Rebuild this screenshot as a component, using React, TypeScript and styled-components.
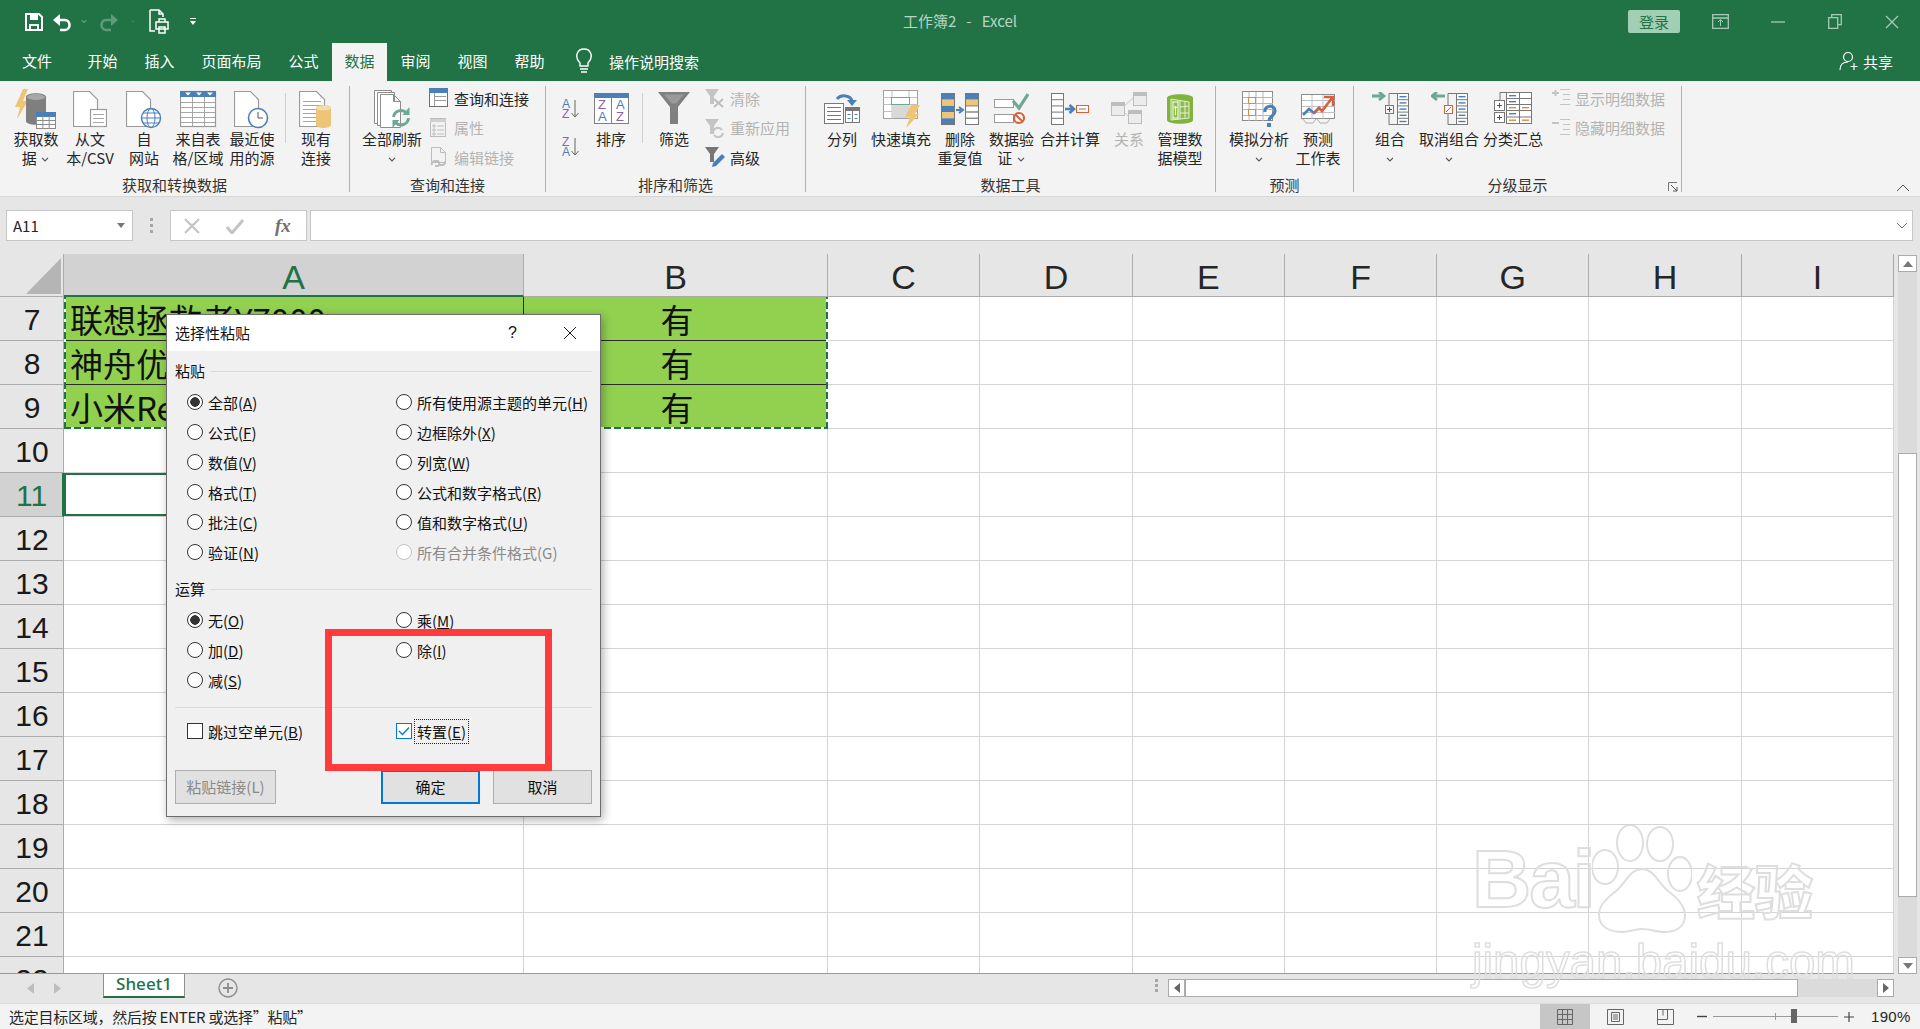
import React from 'react';
import styled, { createGlobalStyle } from 'styled-components';

const UI = `"Noto Sans CJK SC", "Noto Sans", sans-serif`;
const GREEN = '#217346';
const BLUE = '#4a7fb8';
const PURPLE = '#8e5fb0';
const ORANGE = '#eec476';
const GREY = '#7f7f7f';
const TEAL = '#6ea892';
const RED = '#d9603b';

const GlobalStyle = createGlobalStyle`
  html, body { margin: 0; padding: 0; background: #fff; }
  body { font-family: ${UI}; font-size: 15px; color: #262626; }
  * { box-sizing: border-box; }
`;

const Page = styled.div`
  position: relative;
  width: 1920px;
  height: 1029px;
  overflow: hidden;
  display: flex;
  flex-direction: column;
  background: #e6e6e6;
`;

/* title bar */
const TitleBar = styled.div`
  height: 43px;
  background: ${GREEN};
  display: grid;
  grid-template-columns: 1fr auto 1fr;
  align-items: center;
`;
const Qat = styled.div`
  display: flex;
  align-items: center;
  padding-left: 24px;
  height: 40px;
`;
const QatSlot = styled.span<{ $w: number }>`
  width: ${p => p.$w}px;
  display: flex;
  align-items: center;
  justify-content: center;
`;
const DocTitle = styled.div`
  color: #b9d3c4;
  font-size: 15px;
  line-height: 38px;
  height: 40px;
  white-space: pre;
`;
const WinControls = styled.div`
  display: flex;
  align-items: center;
  justify-content: flex-end;
  height: 40px;
`;
const SignIn = styled.div`
  width: 52px;
  height: 23px;
  margin-right: 12px;
  background: #a2cfb4;
  border-radius: 2px;
  color: ${GREEN};
  text-align: center;
  line-height: 23px;
  font-size: 15px;
`;
const WinBtn = styled.span`
  width: 57px;
  display: flex;
  justify-content: center;
`;

/* tabs */
const TabRow = styled.div`
  height: 38px;
  background: ${GREEN};
  display: flex;
  align-items: stretch;
  color: #fff;
`;
const Tab = styled.div<{ $active?: boolean; $w?: number }>`
  width: ${p => (p.$w ? `${p.$w}px` : 'auto')};
  padding: ${p => (p.$w ? '0' : '0 13.5px')};
  text-align: center;
  line-height: 36px;
  font-size: 15px;
  background: ${p => (p.$active ? '#f3f3f3' : 'transparent')};
  color: ${p => (p.$active ? GREEN : '#fff')};
`;
const TellMe = styled.div`
  display: flex;
  align-items: center;
  padding-left: 17px;
  gap: 16px;
  font-size: 15px;
  height: 36px;
`;
const Share = styled.div`
  margin-left: auto;
  display: flex;
  align-items: center;
  gap: 4px;
  padding-right: 27px;
  height: 36px;
  font-size: 15px;
`;

/* ribbon */
const Ribbon = styled.div`
  height: 116px;
  background: #f3f3f3;
  display: flex;
  padding-top: 5px;
  position: relative;
  border-bottom: 1px solid #d6d6d6;
`;
const Group = styled.div<{ $w: number }>`
  width: ${p => p.$w}px;
  height: 106px;
  border-right: 1px solid #b1b1b1;
  display: flex;
  flex-direction: column;
  position: relative;
`;
const GroupBody = styled.div<{ $pad: number }>`
  height: 92px;
  display: flex;
  align-items: flex-start;
  padding-left: ${p => p.$pad}px;
`;
const GroupLabel = styled.div`
  height: 14px;
  line-height: 14px;
  text-align: center;
  font-size: 15px;
  color: #333;
`;
const Tool = styled.div<{ $w: number; $dim?: boolean }>`
  width: ${p => p.$w}px;
  flex: none;
  display: flex;
  flex-direction: column;
  align-items: center;
  padding-top: 2px;
  color: ${p => (p.$dim ? '#b3b3b3' : '#262626')};
`;
const IconSlot = styled.div`
  height: 41px;
  display: flex;
  align-items: center;
  justify-content: center;
`;
const ToolText = styled.div`
  font-size: 15px;
  line-height: 19px;
  text-align: center;
  white-space: nowrap;
`;
const VSep = styled.div<{ $l: number; $r: number }>`
  width: 1px;
  height: 50px;
  margin: 7px ${p => p.$r}px 0 ${p => p.$l}px;
  background: #d0d0d0;
  flex: none;
`;
const SmallCol = styled.div<{ $ml: number }>`
  display: flex;
  flex-direction: column;
  gap: 5.5px;
  margin-left: ${p => p.$ml}px;
`;
const SmallRow = styled.div<{ $dim?: boolean }>`
  height: 24px;
  display: flex;
  align-items: center;
  gap: 5px;
  font-size: 15px;
  white-space: nowrap;
  color: ${p => (p.$dim ? '#b3b3b3' : '#262626')};
`;
const SortCol = styled.div`
  width: 30px;
  margin-left: 10px;
  padding-top: 13px;
  display: flex;
  flex-direction: column;
  align-items: center;
  gap: 18px;
  flex: none;
`;
const Launcher = styled.span`
  position: absolute;
  right: 3px;
  bottom: 0;
  display: flex;
`;
const Collapse = styled.span`
  position: absolute;
  right: 10px;
  bottom: 4px;
  display: flex;
`;

/* formula bar */
const FormulaBar = styled.div`
  height: 57px;
  background: #e6e6e6;
  display: flex;
  align-items: flex-start;
  padding: 13px 0 0 6px;
`;
const NameBox = styled.div`
  width: 127px;
  height: 31px;
  background: #fff;
  border: 1px solid #c6c6c6;
  display: flex;
  align-items: center;
  justify-content: space-between;
  padding: 0 7px 0 6px;
  font-size: 15px;
`;
const Dots = styled.div`
  width: 37px;
  height: 31px;
  display: flex;
  flex-direction: column;
  align-items: center;
  justify-content: center;
  gap: 3px;
  i { width: 3px; height: 3px; background: #a6a6a6; }
`;
const FxBox = styled.div`
  width: 137px;
  height: 31px;
  background: #fff;
  border: 1px solid #c6c6c6;
  display: flex;
  align-items: center;
  padding-left: 13px;
  gap: 26px;
`;
const FxGlyph = styled.span`
  font-family: "Liberation Serif", serif;
  font-style: italic;
  font-weight: 700;
  font-size: 19px;
  color: #707070;
  margin-left: 5px;
`;
const FormulaInput = styled.div`
  width: 1603px;
  height: 31px;
  margin-left: 3px;
  background: #fff;
  border: 1px solid #c6c6c6;
  display: flex;
  align-items: center;
  justify-content: flex-end;
  padding-right: 4px;
`;

/* sheet */
const SheetWrap = styled.div`
  height: 720px;
  display: flex;
  background: #fff;
`;
const Grid = styled.div`
  width: 1894px;
  height: 720px;
  overflow: hidden;
  display: grid;
  grid-template-columns: 64px 460px 304px repeat(7, 152.3px);
  grid-template-rows: 43px repeat(15, 44px) 17px;
  position: relative;
  border-bottom: 1px solid #9a9a9a;
`;
const Corner = styled.div`
  background: #e6e6e6;
  border-bottom: 1px solid #ababab;
  border-right: 1px solid #ababab;
  display: flex;
  align-items: flex-end;
  justify-content: flex-end;
  padding: 0 2px 2px 0;
`;
const ColHead = styled.div<{ $on?: boolean }>`
  background: ${p => (p.$on ? '#d2d2d2' : '#e6e6e6')};
  color: ${p => (p.$on ? GREEN : '#262626')};
  border-right: 1px solid #ababab;
  border-bottom: ${p => (p.$on ? `2px solid ${GREEN}` : '1px solid #ababab')};
  font-family: "Liberation Sans", sans-serif;
  font-size: 34px;
  line-height: 46px;
  text-align: center;
  overflow: hidden;
`;
const RowHead = styled.div<{ $on?: boolean }>`
  background: ${p => (p.$on ? '#d2d2d2' : '#e6e6e6')};
  color: ${p => (p.$on ? GREEN : '#1a1a1a')};
  border-right: ${p => (p.$on ? `2px solid ${GREEN}` : '1px solid #ababab')};
  border-bottom: 1px solid #ababab;
  font-family: "Liberation Sans", sans-serif;
  font-size: 30px;
  line-height: 46px;
  padding-left: 1px;
  text-align: center;
  overflow: hidden;
`;
const Cell = styled.div<{ $fill?: boolean; $center?: boolean; $active?: boolean }>`
  background: ${p => (p.$fill ? '#92d050' : '#fff')};
  border-right: 1px solid ${p => (p.$fill ? '#2b2b2b' : '#d4d4d4')};
  border-bottom: 1px solid ${p => (p.$fill ? '#2b2b2b' : '#d4d4d4')};
  font-size: 33px;
  line-height: 45px;
  color: #111;
  padding-left: ${p => (p.$center ? '3px' : '6px')};
  white-space: nowrap;
  overflow: hidden;
  text-align: ${p => (p.$center ? 'center' : 'left')};
  ${p => (p.$active ? `box-shadow: inset 0 0 0 2px ${GREEN};` : '')}
`;
const Ants = styled.div`
  position: absolute;
  inset: 0;
  grid-column: 2 / 4;
  grid-row: 2 / 5;
  pointer-events: none;
  background:
    repeating-linear-gradient(90deg, ${GREEN} 0 7px, #fff 7px 10px) left bottom / 100% 2px no-repeat,
    repeating-linear-gradient(0deg, ${GREEN} 0 7px, #fff 7px 10px) left top / 2px 100% no-repeat,
    repeating-linear-gradient(0deg, ${GREEN} 0 7px, #fff 7px 10px) right top / 2px 100% no-repeat;
`;
const VScroll = styled.div`
  width: 26px;
  background: #e6e6e6;
  display: flex;
  flex-direction: column;
  padding: 1px 3px 0 4px;
`;
const ScrollBtn = styled.div`
  flex: none;
  width: 100%;
  height: 17px;
  background: #fff;
  border: 1px solid #ababab;
  display: flex;
  align-items: center;
  justify-content: center;
`;
const VTrack = styled.div`
  flex: 1;
  background: #dbdbdb;
  padding-top: 181px;
`;
const VThumb = styled.div`
  height: 444px;
  background: #fff;
  border: 1px solid #ababab;
`;

/* sheet tabs */
const TabBar = styled.div`
  height: 29px;
  background: #e6e6e6;
  display: flex;
  align-items: flex-start;
`;
const TabArrows = styled.div`
  width: 103px;
  height: 28px;
  display: flex;
  align-items: center;
  gap: 20px;
  padding-left: 27px;
`;
const SheetTab = styled.div`
  width: 82px;
  height: 25px;
  margin-top: -1px;
  background: #fff;
  border: 1px solid #8f8f8f;
  border-top: none;
  border-bottom: 2px solid ${GREEN};
  color: ${GREEN};
  text-align: center;
  font-family: "Noto Sans", sans-serif;
  font-size: 17px;
  line-height: 22px;
  font-weight: 500;
`;
const AddSheet = styled.div`
  margin: 4px 0 0 33px;
  display: flex;
`;
const TabDots = styled.div`
  margin: 5px 0 0 917px;
  display: flex;
  flex-direction: column;
  gap: 2px;
  i { width: 3px; height: 3px; background: #a6a6a6; }
`;
const HScroll = styled.div`
  width: 726px;
  margin: 5px 0 0 10px;
  display: flex;
  height: 18px;
`;
const HBtn = styled.div`
  width: 17px;
  height: 18px;
  flex: none;
  background: #fff;
  border: 1px solid #ababab;
  display: flex;
  align-items: center;
  justify-content: center;
`;
const HTrack = styled.div`
  flex: 1;
  background: #dbdbdb;
`;
const HThumb = styled.div`
  width: 613px;
  height: 18px;
  background: #fff;
  border: 1px solid #ababab;
`;

/* status bar */
const StatusBar = styled.div`
  height: 26px;
  background: #f3f3f3;
  border-top: 1px solid #dcdcdc;
  display: flex;
  align-items: center;
  padding-left: 9px;
  font-size: 15px;
  line-height: 24px;
`;
const StatusText = styled.span`
  letter-spacing: -0.25px;
`;
const StatusRight = styled.div`
  margin-left: auto;
  display: flex;
  align-items: center;
  height: 100%;
`;
const ViewBtn = styled.div<{ $on?: boolean }>`
  width: 50px;
  height: 100%;
  background: ${p => (p.$on ? '#c6c6c6' : 'transparent')};
  display: flex;
  align-items: center;
  justify-content: center;
`;
const Zoomer = styled.div`
  display: flex;
  align-items: center;
  margin-left: 7px;
  gap: 6px;
`;
const ZoomTrack = styled.div`
  position: relative;
  width: 125px;
  height: 1px;
  background: #9a9a9a;
  &::before {
    content: '';
    position: absolute;
    left: 62px;
    top: -3px;
    width: 1px;
    height: 7px;
    background: #9a9a9a;
  }
`;
const ZoomThumb = styled.span`
  position: absolute;
  left: 78px;
  top: -7px;
  width: 6px;
  height: 14px;
  background: #666;
`;
const Percent = styled.div`
  width: 66px;
  padding-left: 17px;
  font-family: "Liberation Sans", sans-serif;
  font-size: 15px;
  letter-spacing: 0.3px;
  white-space: nowrap;
`;

/* dialog */
const Dialog = styled.div`
  position: absolute;
  left: 166px;
  top: 314px;
  width: 435px;
  height: 503px;
  background: #f0f0f0;
  border: 1px solid #6d6d6d;
  box-shadow: 2px 3px 9px rgba(0, 0, 0, 0.32);
  display: flex;
  flex-direction: column;
  color: #111;
  font-size: 15px;
`;
const DialogTitle = styled.div`
  height: 36px;
  flex: none;
  background: #fff;
  display: flex;
  align-items: center;
  padding: 0 23px 0 8px;
  line-height: 36px;
`;
const HelpMark = styled.span`
  margin-left: auto;
  margin-right: 46px;
  font-family: "Liberation Sans", sans-serif;
  font-size: 16px;
`;
const DialogBody = styled.div`
  padding: 0 8px;
  display: flex;
  flex-direction: column;
`;
const Legend = styled.div<{ $top: number }>`
  height: 20px;
  margin-top: ${p => p.$top}px;
  display: flex;
  align-items: center;
  gap: 5px;
  line-height: 20px;
  &::after {
    content: '';
    flex: 1;
    height: 1px;
    background: #dadada;
  }
`;
const OptionGrid = styled.div<{ $top: number }>`
  margin-top: ${p => p.$top}px;
  display: grid;
  grid-template-columns: 209px 1fr;
  grid-auto-rows: 30px;
`;
const Option = styled.div<{ $dim?: boolean }>`
  display: flex;
  align-items: center;
  padding-left: 12px;
  gap: 5px;
  white-space: nowrap;
  color: ${p => (p.$dim ? '#8a8a8a' : '#111')};
`;
const Radio = styled.span<{ $on?: boolean; $dim?: boolean }>`
  width: 16px;
  height: 16px;
  flex: none;
  border-radius: 50%;
  border: 1px solid ${p => (p.$dim ? '#c4c4c4' : '#333')};
  background: ${p => (p.$on ? 'radial-gradient(circle, #333 0 4.5px, #fff 5px)' : '#fff')};
`;
const Check = styled.span<{ $on?: boolean }>`
  width: 16px;
  height: 16px;
  flex: none;
  border: 1px solid ${p => (p.$on ? '#0078d7' : '#333')};
  background: #fff;
  display: flex;
  align-items: center;
  justify-content: center;
`;
const FocusLabel = styled.span`
  outline: 1px dotted #222;
  padding: 1px 2px;
  margin-left: -2px;
  line-height: 21px;
`;
const Divider = styled.div`
  height: 1px;
  margin-top: 12px;
  background: #dadada;
`;
const ButtonRow = styled.div`
  margin-top: 24px;
  display: flex;
  gap: 13px;
`;
const DlgButton = styled.div<{ $w: number; $primary?: boolean; $dim?: boolean }>`
  width: ${p => p.$w}px;
  height: 34px;
  background: #e1e1e1;
  border: ${p => (p.$primary ? '2px solid #0078d7' : '1px solid #adadad')};
  color: ${p => (p.$dim ? '#8a8a8a' : '#111')};
  text-align: center;
  line-height: ${p => (p.$primary ? '30px' : '32px')};
  margin-left: ${p => (p.$primary ? 'auto' : '0')};
`;
const RedBox = styled.div`
  position: absolute;
  left: 325px;
  top: 629px;
  width: 227px;
  height: 142px;
  border: 7px solid #ff3b3b;
  pointer-events: none;
`;

/* watermark */
const Watermark = styled.div`
  position: absolute;
  left: 1472px;
  top: 825px;
  width: 350px;
  pointer-events: none;
  filter: blur(0.5px);
  color: transparent;
  -webkit-text-stroke: 2px #dedede;
`;
const MarkTop = styled.div`
  display: flex;
  align-items: flex-end;
  height: 108px;
`;
const MarkBai = styled.span`
  width: 120px;
  font-family: "Liberation Sans", sans-serif;
  font-weight: 700;
  font-size: 82px;
  line-height: 108px;
  letter-spacing: -2px;
`;
const MarkJing = styled.span`
  margin-left: 5px;
  font-weight: 900;
  font-size: 58px;
  line-height: 88px;
  white-space: nowrap;
`;
const MarkUrl = styled.div`
  margin-top: 3px;
  font-family: "Liberation Sans", sans-serif;
  font-size: 47.5px;
  line-height: 52px;
  white-space: nowrap;
  -webkit-text-stroke-width: 1.5px;
`;

/* icons */
const Svg = ({ w, h, children }: { w: number; h: number; children: React.ReactNode }) => (
  <svg width={w} height={h} viewBox={`0 0 ${w} ${h}`} fill="none" style={{ display: 'block', flex: 'none' }}>
    {children}
  </svg>
);

const Chev = ({ c = '#555' }: { c?: string }) => (
  <svg width="8" height="5" viewBox="0 0 8 5" fill="none" style={{ display: 'inline-block', verticalAlign: 'middle', margin: '0 1px' }}>
    <path d="M1 .8 4 3.8 7 .8" stroke={c} strokeWidth="1.2" />
  </svg>
);

const Page1 = ({ w = 25, h = 36, s = '#9a9a9a' }: { w?: number; h?: number; s?: string }) => (
  <path d={`M.5.5h${w - 9}l8 8v${h - 9}h-${w - 1}z M${w - 9}.5v8h8`} fill="#fff" stroke={s} strokeWidth="1.2" />
);

const Lines = ({ x, y, n, w, c = '#a6a6a6', gap = 4 }: { x: number; y: number; n: number; w: number; c?: string; gap?: number }) => (
  <>
    {Array.from({ length: n }).map((_, i) => (
      <rect key={i} x={x} y={y + i * gap} width={w} height="1" fill={c} />
    ))}
  </>
);

const MiniTable = ({ x, y, w, h, head = BLUE, rows = 3, cols = 3, s = '#8c8c8c' }: { x: number; y: number; w: number; h: number; head?: string; rows?: number; cols?: number; s?: string }) => (
  <g>
    <rect x={x + 0.5} y={y + 0.5} width={w} height={h} fill="#fff" stroke={s} />
    <rect x={x} y={y} width={w + 1} height={h / (rows + 1) + 1} fill={head} />
    {Array.from({ length: rows - 1 }).map((_, i) => (
      <rect key={i} x={x} y={y + ((i + 2) * h) / (rows + 1)} width={w} height="1" fill={s} />
    ))}
    {Array.from({ length: cols - 1 }).map((_, i) => (
      <rect key={i} x={x + ((i + 1) * w) / cols} y={y + h / (rows + 1)} width="1" height={(h * rows) / (rows + 1)} fill={s} />
    ))}
  </g>
);

const IcoGetData = () => (
  <Svg w={42} h={40}>
    <path d="M8 0 0 18h5L2 30 13 12H8l5-12z" fill={ORANGE} />
    <path d="M11 8c0-5 20-5 20 0v24c0 5-20 5-20 0z" fill={GREY} />
    <ellipse cx="21" cy="8" rx="9" ry="3" fill="#a8a8a8" />
    <MiniTable x={21} y={23} w={19} h={16} />
  </Svg>
);
const IcoFromText = () => (
  <Svg w={34} h={40}>
    <g transform="translate(0 2)">
      <Page1 />
      <rect x="17.5" y="18.5" width="16" height="17" fill="#fff" stroke="#9a9a9a" strokeWidth="1.2" />
      <Lines x={20} y={23} n={4} w={11} />
    </g>
  </Svg>
);
const IcoFromWeb = () => (
  <Svg w={36} h={40}>
    <g transform="translate(0 2)">
      <Page1 />
      <circle cx="25" cy="27" r="9.5" fill="#fff" stroke={BLUE} strokeWidth="1.4" />
      <ellipse cx="25" cy="27" rx="4" ry="9.5" stroke={BLUE} />
      <path d="M15.5 27h19M17 22h16M17 32h16" stroke={BLUE} />
    </g>
  </Svg>
);
const IcoTable = () => (
  <Svg w={37} h={40}>
    <g transform="translate(0 2)">
      <rect x=".5" y=".5" width="35" height="35" fill="#fff" stroke="#9a9a9a" strokeWidth="1.2" />
      <rect x="0" y="0" width="36" height="6" fill={BLUE} />
      <path d="M5 1.5h6l-3 3zM16 1.5h6l-3 3zM27 1.5h6l-3 3z" fill="#fff" />
      <Lines x={1} y={11} n={5} w={34} gap={5} />
      <rect x="12" y="6" width="1" height="29" fill="#a6a6a6" />
      <rect x="24" y="6" width="1" height="29" fill="#a6a6a6" />
    </g>
  </Svg>
);
const IcoRecent = () => (
  <Svg w={36} h={40}>
    <g transform="translate(0 2)">
      <Page1 />
      <circle cx="24" cy="27" r="9.5" fill="#fff" stroke={BLUE} strokeWidth="1.6" />
      <path d="M24 21v6h5" stroke="#555" />
    </g>
  </Svg>
);
const IcoExisting = () => (
  <Svg w={34} h={40}>
    <g transform="translate(0 2)">
      <Page1 w={26} />
      <Lines x={4} y={10} n={6} w={18} gap={4} />
      <path d="M17 17c0-4 15-4 15 0v17c0 4-15 4-15 0z" fill={ORANGE} />
      <ellipse cx="24.5" cy="17" rx="7.5" ry="2.6" fill="#f5dca8" />
    </g>
  </Svg>
);
const IcoRefresh = () => (
  <Svg w={37} h={38}>
    <path d="M.5.5h17v33H.5z" fill="#fff" stroke="#8c8c8c" />
    <path d="M3.5 2.500h17v33h-17z" fill="#fff" stroke="#8c8c8c" />
    <path d="M6.500 4.500h13l7 7v26h-20zM19.500 4.500v7h7" fill="#fff" stroke="#8c8c8c" />
    <path d="M19.500 27a7.500 7.500 0 0 1 13-4M34.500 28a7.500 7.500 0 0 1-13 4.500" stroke={TEAL} strokeWidth="3" />
    <path d="M35.500 17v8h-7zM18.500 38v-8h7z" fill={TEAL} />
  </Svg>
);
const IcoQuery = () => (
  <Svg w={20} h={20}>
    <rect x=".5" y=".5" width="18" height="18" fill="#fff" stroke="#6f6f6f" />
    <rect x="0" y="0" width="19" height="5" fill={BLUE} />
    <rect x="6" y="8" width="11" height="1" fill="#9a9a9a" />
    <rect x="6" y="12" width="11" height="1" fill="#9a9a9a" />
    <rect x="5" y="5" width="1" height="13" fill="#9a9a9a" />
  </Svg>
);
const IcoProps = () => (
  <Svg w={20} h={20}>
    <rect x="1.5" y=".5" width="15" height="18" fill="#f3f3f3" stroke="#bdbdbd" />
    <rect x="1" y="1" width="16" height="3" fill="#cfcfcf" />
    <path d="M4 7h2v2H4zM4 11h2v2H4zM4 15h2v2H4zM8 8h7M8 12h7M8 16h7" stroke="#bdbdbd" />
  </Svg>
);
const IcoEditLinks = () => (
  <Svg w={20} h={20}>
    <path d="M2.5.5h9l5 5v10h-14zM11.5.5v5h5" fill="#f3f3f3" stroke="#bdbdbd" />
    <path d="M3 18a3 3 0 0 1 3-4h3a3 3 0 0 1 0 5H6M16 14a3 3 0 0 1-3 4h-3" stroke="#bdbdbd" strokeWidth="2" />
  </Svg>
);
const SortGlyph = styled.text<{ $c: string; $size: number }>`
  font-family: "Liberation Sans", sans-serif;
  font-size: ${p => p.$size}px;
  fill: ${p => p.$c};
`;
const IcoSortAZ = ({ flip }: { flip?: boolean }) => (
  <Svg w={18} h={20}>
    <SortGlyph x="0" y="9" $size={12} $c={flip ? PURPLE : BLUE}>{flip ? 'Z' : 'A'}</SortGlyph>
    <SortGlyph x="0" y="19" $size={12} $c={flip ? BLUE : PURPLE}>{flip ? 'A' : 'Z'}</SortGlyph>
    <path d="M13 1v17M9.5 14l3.500 4 3.500-4" stroke="#666" />
  </Svg>
);
const IcoSort = () => (
  <Svg w={35} h={32}>
    <rect x=".5" y=".5" width="34" height="30" fill="#fff" stroke="#808080" />
    <rect x="0" y="0" width="35" height="5" fill={BLUE} />
    <rect x="17" y="5" width="1" height="26" fill="#808080" />
    <SortGlyph x="4" y="16" $size={13} $c={PURPLE}>Z</SortGlyph>
    <SortGlyph x="4" y="28" $size={13} $c={BLUE}>A</SortGlyph>
    <SortGlyph x="22" y="16" $size={13} $c={BLUE}>A</SortGlyph>
    <SortGlyph x="22" y="28" $size={13} $c={PURPLE}>Z</SortGlyph>
  </Svg>
);
const IcoFunnel = () => (
  <Svg w={33} h={33}>
    <path d="M0 0h32L20 15v17h-8V15z" fill="#808080" />
    <path d="M6 2.500h20l-8 9h-4z" fill="#9a9a9a" />
  </Svg>
);
const SmallFunnel = ({ c }: { c: string }) => <path d="M0 1h14L9 8v8H5V8z" fill={c} />;
const IcoClear = () => (
  <Svg w={20} h={20}>
    <SmallFunnel c="#c4c4c4" />
    <path d="M9 11l9 8M18 11l-9 8" stroke="#bdbdbd" strokeWidth="2" />
  </Svg>
);
const IcoReapply = () => (
  <Svg w={20} h={20}>
    <SmallFunnel c="#c4c4c4" />
    <path d="M8 14a5 5 0 0 1 9-2M18 15a5 5 0 0 1-9 2" stroke="#c4c4c4" strokeWidth="2" />
  </Svg>
);
const IcoAdvanced = () => (
  <Svg w={20} h={22}>
    <SmallFunnel c="#777" />
    <path d="M7 21l1-4 9-9 3 3-9 9z" fill={BLUE} />
  </Svg>
);
const IcoTextCols = () => (
  <Svg w={36} h={32}>
    <path d="M13 6a8 6 0 0 1 15 2" stroke={BLUE} strokeWidth="3" />
    <path d="M23 7h10l-5 6z" fill={BLUE} />
    <rect x=".5" y="10.500" width="19" height="20" fill="#fff" stroke="#777" />
    <Lines x={3} y={14} n={4} w={14} c={BLUE} gap={4} />
    <rect x="21.500" y="14.500" width="14" height="15" fill="#fff" stroke="#777" />
    <rect x="21" y="14" width="15" height="4" fill="#777" />
    <path d="M28.500 18v11" stroke="#777" />
    <path d="M23.500 21.500h3M30.500 21.500h3M23.500 25.500h3M30.500 25.500h3" stroke={BLUE} />
  </Svg>
);
const IcoFlash = () => (
  <Svg w={37} h={38}>
    <rect x=".5" y=".5" width="34" height="28" fill="#fff" stroke="#a0a0a0" />
    <path d="M.5 7.500h34M.5 14.500h34M.5 21.500h34M9 1v28M26 1v28" stroke="#c0c0c0" />
    <rect x="8.500" y="7.500" width="18" height="7" fill="#fff" stroke={TEAL} />
    <rect x="9" y="15" width="17" height="13" fill="#d9d9d9" />
    <path d="M28 15h9l-5 9h4L23 38l4-11h-5z" fill={ORANGE} />
  </Svg>
);
const Stripe = ({ x, rows }: { x: number; rows: string[] }) => (
  <g>
    {rows.map((c, i) => (
      <rect key={i} x={x + 0.5} y={i * 6.2 + 0.5} width="13" height="6.200" fill={c} stroke={c === '#fff' ? '#777' : 'none'} />
    ))}
    <rect x={x + 0.5} y=".5" width="13" height="31" stroke="#777" />
  </g>
);
const IcoDup = () => (
  <Svg w={38} h={32}>
    <Stripe x={0} rows={[BLUE, ORANGE, BLUE, ORANGE, BLUE]} />
    <Stripe x={24} rows={[BLUE, ORANGE, '#fff', '#fff', '#fff']} />
    <path d="M15 17h5M18 14l4 3-4 3" stroke={BLUE} strokeWidth="2" />
  </Svg>
);
const IcoValidate = () => (
  <Svg w={35} h={32}>
    <rect x=".5" y="6.500" width="19" height="8" fill="#fff" stroke="#9a9a9a" />
    <rect x=".5" y="21.500" width="19" height="8" fill="#fff" stroke="#9a9a9a" />
    <path d="M19 8l6 7L34 1" stroke={TEAL} strokeWidth="3.200" />
    <circle cx="25" cy="25" r="5" fill="#fff" stroke={RED} strokeWidth="2.200" />
    <path d="M21.500 21.500l7 7" stroke={RED} strokeWidth="2" />
  </Svg>
);
const IcoConsolidate = () => (
  <Svg w={38} h={32}>
    <rect x=".5" y=".5" width="12" height="31" fill="#fff" stroke="#777" />
    <Lines x={1} y={6.2} n={4} w={11} c="#777" gap={6.2} />
    <path d="M14 16h7M18.500 12l4.500 4-4.500 4" stroke={BLUE} strokeWidth="2.600" />
    <rect x="25.5" y="12.5" width="12" height="7" fill="#fff" stroke={RED} />
    <rect x="28" y="15.500" width="7" height="1" fill={RED} />
  </Svg>
);
const IcoRelations = () => (
  <Svg w={36} h={33}>
    <path d="M13 14l9-8M13 20l4 4" stroke="#c8c8c8" />
    <rect x=".5" y="10.500" width="13" height="13" fill="#ececec" stroke="#bdbdbd" />
    <rect x="0" y="10" width="14" height="4" fill="#bdbdbd" />
    <rect x="22.500" y=".5" width="13" height="13" fill="#ececec" stroke="#bdbdbd" />
    <rect x="22" y="0" width="14" height="4" fill="#bdbdbd" />
    <rect x="17.500" y="18.500" width="13" height="13" fill="#ececec" stroke="#bdbdbd" />
    <rect x="17" y="18" width="14" height="4" fill="#bdbdbd" />
  </Svg>
);
const IcoModel = () => (
  <Svg w={28} h={30}>
    <path d="M1 4c0-5 26-5 26 0v22c0 5-26 5-26 0z" fill="#7fb33d" />
    <path d="M5 5l18 3v16l-18 2z" fill="#8dbd4d" stroke="#e4f0d0" />
    <path d="M14 7v18M19 7.500v16M14 13l9-1M14 19l9 0" stroke="#e4f0d0" />
    <path d="M7 7v18M12 7v18M7 8h5M7 24h5" stroke="#fff" />
    <path d="M9.500 21V12M8 14l1.500-2 1.500 2" stroke="#fff" />
  </Svg>
);
const IcoWhatIf = () => (
  <Svg w={35} h={36}>
    <rect x=".5" y=".5" width="30" height="29" fill="#fff" stroke="#8c8c8c" />
    <path d="M1 6.500h30M1 12.500h30M1 18.500h30M1 24.500h30M7 1v29M14 1v29M21 1v29" stroke="#b8b8b8" />
    <rect x="6.500" y="6.500" width="7" height="6" fill="#fff" stroke="#e08a3c" />
    <rect x="6.500" y="18.500" width="7" height="6" fill="#fff" stroke="#e08a3c" />
    <path d="M23 21c-1-7 10-8 10-1 0 5-6 5-6 10" stroke={BLUE} strokeWidth="3.200" />
    <rect x="25" y="32" width="4" height="4" fill={BLUE} />
  </Svg>
);
const IcoForecast = () => (
  <Svg w={34} h={30}>
    <rect x=".5" y=".5" width="33" height="24" fill="#fff" stroke="#8c8c8c" />
    <path d="M1 6.500h33M1 12.500h33M1 18.500h33M11 1v24M22 1v24" stroke="#c0c0c0" />
    <path d="M2 21l6-6 5 4 6-6" stroke={BLUE} strokeWidth="2.600" />
    <path d="M13 19l5-5 3 3L31 4M23 3h9v9" stroke={RED} strokeWidth="2.600" />
    <path d="M2 25l3 4h7l3-4M16 25l3 4h7l3-4" stroke="#b0b0b0" />
  </Svg>
);
const Bracket = ({ x }: { x: number }) => <path d={`M${x + 8} .5h-8v31h8`} stroke="#777" />;
const RowStack = ({ x }: { x: number }) => (
  <g>
    <rect x={x + 0.5} y=".5" width="11" height="31" fill="#fff" stroke="#777" />
    {[0, 6.2, 12.4, 18.6, 24.8].map(y => (
      <g key={y}>
        <rect x={x} y={y} width="12" height="1" fill="#777" />
        <rect x={x + 2.5} y={y + 3} width="7" height="1.4" fill={BLUE} />
      </g>
    ))}
  </g>
);
const IcoGroup = () => (
  <Svg w={37} h={33}>
    <g transform="translate(0 1)">
      <path d="M0 3h11M7-1l5 4-5 4" stroke={TEAL} strokeWidth="2.800" />
      <Bracket x={17} />
      <rect x="13.5" y="12.5" width="8" height="8" fill="#f3f3f3" stroke="#777" />
      <path d="M15 16.500h5M17.500 14v5" stroke="#555" />
      <RowStack x={25} />
    </g>
  </Svg>
);
const IcoUngroup = () => (
  <Svg w={37} h={33}>
    <g transform="translate(0 1)">
      <path d="M14 3H2M6-1L1 3l5 4" stroke={TEAL} strokeWidth="2.800" />
      <Bracket x={17} />
      <rect x="13.5" y="12.5" width="8" height="8" fill="#fff" stroke={RED} />
      <path d="M15 19l5-5" stroke={RED} />
      <RowStack x={25} />
    </g>
  </Svg>
);
const IcoSubtotal = () => (
  <Svg w={38} h={33}>
    <rect x="12.5" y=".5" width="25" height="31" fill="#fff" stroke="#777" />
    <path d="M13 6.500h25M13 12.500h25M13 18.500h25M13 25h25M25.500 1v31" stroke="#777" />
    <rect x="15" y="3" width="7" height="1.4" fill={BLUE} />
    <rect x="15" y="9" width="7" height="1.4" fill={BLUE} />
    <rect x="15" y="21" width="7" height="1.4" fill={BLUE} />
    <rect x="15" y="15" width="7" height="1.4" fill="#e08a3c" />
    <rect x="28" y="15" width="7" height="1.4" fill="#e08a3c" />
    <rect x="15" y="27.500" width="7" height="1.4" fill="#e08a3c" />
    <rect x="28" y="27.500" width="7" height="1.4" fill="#e08a3c" />
    <path d="M12 .5H6v8" stroke="#777" />
    <rect x=".5" y="8.500" width="10" height="10" fill="#fff" stroke="#777" />
    <rect x=".5" y="20.500" width="10" height="10" fill="#fff" stroke="#777" />
    <path d="M3 13.500h5M5.500 11v5M3 25.500h5M5.500 23v5" stroke="#555" />
  </Svg>
);
const IcoDetail = ({ plus }: { plus?: boolean }) => (
  <Svg w={18} h={20}>
    <path d={plus ? 'M0 5h7M3.5 2v6' : 'M0 5h7'} stroke="#c4c4c4" strokeWidth="2" />
    <path d="M8 1h10v1H8zM11 6h7v1h-7zM11 11h7v1h-7zM8 16h10v1H8z" fill="#c4c4c4" />
  </Svg>
);

const Mnemonic = ({ text, k, u = true }: { text: string; k: string; u?: boolean }) => (
  <span>
    {text}(
    {u ? <u>{k}</u> : k})
  </span>
);

const leftPaste: [string, string][] = [['全部', 'A'], ['公式', 'F'], ['数值', 'V'], ['格式', 'T'], ['批注', 'C'], ['验证', 'N']];
const rightPaste: [string, string][] = [['所有使用源主题的单元', 'H'], ['边框除外', 'X'], ['列宽', 'W'], ['公式和数字格式', 'R'], ['值和数字格式', 'U'], ['所有合并条件格式', 'G']];

const columns = ['A', 'B', 'C', 'D', 'E', 'F', 'G', 'H', 'I'];
const rows = Array.from({ length: 16 }, (_, i) => i + 7);
const content: Record<number, string> = { 7: '联想拯救者Y7000', 8: '神舟优越者', 9: '小米RedmiBook' };

export default function App() {
  return (
    <Page>
      <GlobalStyle />
      <TitleBar>
        <Qat>
          <QatSlot $w={20}>
            <Svg w={18} h={18}>
              <path d="M1 1h13l3 3v13H1z" stroke="#fff" strokeWidth="2" />
              <path d="M5 1h8v6H5zM4 11h10v6H4z" fill="#fff" />
              <rect x="6" y="13" width="6" height="3" fill={GREEN} />
            </Svg>
          </QatSlot>
          <QatSlot $w={36}>
            <Svg w={20} h={20}>
              <path d="M3 8h9a5 5 0 0 1 1 10H8" stroke="#fff" strokeWidth="2.6" />
              <path d="M8 2v12L1 8z" fill="#fff" />
            </Svg>
          </QatSlot>
          <QatSlot $w={8}><Chev c="#a9c8b6" /></QatSlot>
          <QatSlot $w={42}>
            <Svg w={20} h={20}>
              <path d="M17 8H8a5 5 0 0 0-1 10h5" stroke="#5f9a7b" strokeWidth="2.6" />
              <path d="M12 2v12l7-6z" fill="#5f9a7b" />
            </Svg>
          </QatSlot>
          <QatSlot $w={6}><Chev c="#5f9a7b" /></QatSlot>
          <QatSlot $w={46}>
            <Svg w={20} h={26}>
              <path d="M1 1h9l4 4v3M1 1v21h5M10 1v4h4" stroke="#fff" strokeWidth="1.5" />
              <path d="M7 13h12v7H7zM10 10h6v3h-6zM10 18h6v6h-6z" stroke="#fff" strokeWidth="1.5" fill={GREEN} />
            </Svg>
          </QatSlot>
          <QatSlot $w={22}>
            <Svg w={8} h={9}>
              <path d="M1 1h6v1H1zM1 4h6L4 8z" fill="#fff" />
            </Svg>
          </QatSlot>
        </Qat>
        <DocTitle>工作簿2   -   Excel</DocTitle>
        <WinControls>
          <SignIn>登录</SignIn>
          <WinBtn>
            <Svg w={17} h={15}>
              <path d="M.7.7h15.6v13.6H.7zM1 4h15" stroke="#a8c9b6" strokeWidth="1.3" />
              <path d="M8.5 12V6M6 8l2.5-2.500L11 8" stroke="#a8c9b6" />
            </Svg>
          </WinBtn>
          <WinBtn>
            <Svg w={14} h={14}><path d="M0 7h14" stroke="#a8c9b6" strokeWidth="1.3" /></Svg>
          </WinBtn>
          <WinBtn>
            <Svg w={14} h={15}>
              <path d="M.7 3.700h9v10.600h-9zM3.700 3.500V.7h9.600v10h-3.300" stroke="#a8c9b6" strokeWidth="1.3" />
            </Svg>
          </WinBtn>
          <WinBtn>
            <Svg w={14} h={14}><path d="M1 1l12 12M13 1L1 13" stroke="#a8c9b6" strokeWidth="1.3" /></Svg>
          </WinBtn>
        </WinControls>
      </TitleBar>

      <TabRow>
        <Tab $w={74}>文件</Tab>
        <Tab>开始</Tab>
        <Tab>插入</Tab>
        <Tab>页面布局</Tab>
        <Tab>公式</Tab>
        <Tab $active $w={55}>数据</Tab>
        <Tab>审阅</Tab>
        <Tab>视图</Tab>
        <Tab>帮助</Tab>
        <TellMe>
          <Svg w={18} h={26}>
            <path d="M5 15c-6-6-3-14 4-14s10 8 4 14v3H5z" stroke="#fff" strokeWidth="1.4" />
            <path d="M5 21h8M6 24h6" stroke="#fff" strokeWidth="1.4" />
          </Svg>
          <span>操作说明搜索</span>
        </TellMe>
        <Share>
          <Svg w={20} h={20}>
            <circle cx="9" cy="6" r="4.5" stroke="#fff" strokeWidth="1.2" />
            <path d="M1 19c0-5 3-8 8-8M15 12v7M11.5 15.500h7" stroke="#fff" strokeWidth="1.2" />
          </Svg>
          <span>共享</span>
        </Share>
      </TabRow>

      <Ribbon>
        <Group $w={350}>
          <GroupBody $pad={9}>
            <Tool $w={54}><IconSlot><IcoGetData /></IconSlot><ToolText>获取数<br />据 <Chev /></ToolText></Tool>
            <Tool $w={54}><IconSlot><IcoFromText /></IconSlot><ToolText>从文<br />本/CSV</ToolText></Tool>
            <Tool $w={54}><IconSlot><IcoFromWeb /></IconSlot><ToolText>自<br />网站</ToolText></Tool>
            <Tool $w={54}><IconSlot><IcoTable /></IconSlot><ToolText>来自表<br />格/区域</ToolText></Tool>
            <Tool $w={54}><IconSlot><IcoRecent /></IconSlot><ToolText>最近使<br />用的源</ToolText></Tool>
            <VSep $l={6} $r={3} />
            <Tool $w={54}><IconSlot><IcoExisting /></IconSlot><ToolText>现有<br />连接</ToolText></Tool>
          </GroupBody>
          <GroupLabel>获取和转换数据</GroupLabel>
        </Group>
        <Group $w={196}>
          <GroupBody $pad={7}>
            <Tool $w={70}><IconSlot><IcoRefresh /></IconSlot><ToolText>全部刷新<br /><Chev /></ToolText></Tool>
            <SmallCol $ml={2}>
              <SmallRow><IcoQuery />查询和连接</SmallRow>
              <SmallRow $dim><IcoProps />属性</SmallRow>
              <SmallRow $dim><IcoEditLinks />编辑链接</SmallRow>
            </SmallCol>
          </GroupBody>
          <GroupLabel>查询和连接</GroupLabel>
        </Group>
        <Group $w={260}>
          <GroupBody $pad={0}>
            <SortCol><IcoSortAZ /><IcoSortAZ flip /></SortCol>
            <Tool $w={50}><IconSlot><IcoSort /></IconSlot><ToolText>排序</ToolText></Tool>
            <VSep $l={6} $r={6} />
            <Tool $w={50}><IconSlot><IcoFunnel /></IconSlot><ToolText>筛选</ToolText></Tool>
            <SmallCol $ml={6}>
              <SmallRow $dim><IcoClear />清除</SmallRow>
              <SmallRow $dim><IcoReapply />重新应用</SmallRow>
              <SmallRow><IcoAdvanced />高级</SmallRow>
            </SmallCol>
          </GroupBody>
          <GroupLabel>排序和筛选</GroupLabel>
        </Group>
        <Group $w={410}>
          <GroupBody $pad={7}>
            <Tool $w={58}><IconSlot><IcoTextCols /></IconSlot><ToolText>分列</ToolText></Tool>
            <Tool $w={60}><IconSlot><IcoFlash /></IconSlot><ToolText>快速填充</ToolText></Tool>
            <Tool $w={58}><IconSlot><IcoDup /></IconSlot><ToolText>删除<br />重复值</ToolText></Tool>
            <Tool $w={45}><IconSlot><IcoValidate /></IconSlot><ToolText>数据验<br />证 <Chev /></ToolText></Tool>
            <Tool $w={72}><IconSlot><IcoConsolidate /></IconSlot><ToolText>合并计算</ToolText></Tool>
            <Tool $w={46} $dim><IconSlot><IcoRelations /></IconSlot><ToolText>关系</ToolText></Tool>
            <Tool $w={56}><IconSlot><IcoModel /></IconSlot><ToolText>管理数<br />据模型</ToolText></Tool>
          </GroupBody>
          <GroupLabel>数据工具</GroupLabel>
        </Group>
        <Group $w={138}>
          <GroupBody $pad={9}>
            <Tool $w={68}><IconSlot><IcoWhatIf /></IconSlot><ToolText>模拟分析<br /><Chev /></ToolText></Tool>
            <Tool $w={50}><IconSlot><IcoForecast /></IconSlot><ToolText>预测<br />工作表</ToolText></Tool>
          </GroupBody>
          <GroupLabel>预测</GroupLabel>
        </Group>
        <Group $w={328}>
          <GroupBody $pad={10}>
            <Tool $w={52}><IconSlot><IcoGroup /></IconSlot><ToolText>组合<br /><Chev /></ToolText></Tool>
            <Tool $w={66}><IconSlot><IcoUngroup /></IconSlot><ToolText>取消组合<br /><Chev /></ToolText></Tool>
            <Tool $w={62}><IconSlot><IcoSubtotal /></IconSlot><ToolText>分类汇总</ToolText></Tool>
            <SmallCol $ml={8}>
              <SmallRow $dim><IcoDetail plus />显示明细数据</SmallRow>
              <SmallRow $dim><IcoDetail />隐藏明细数据</SmallRow>
            </SmallCol>
          </GroupBody>
          <GroupLabel>分级显示</GroupLabel>
          <Launcher>
            <Svg w={10} h={10}>
              <path d="M.5 9V.5H9" stroke="#777" />
              <path d="M3 3l6 6M9 5v4H5" stroke="#555" />
            </Svg>
          </Launcher>
        </Group>
        <Collapse>
          <Svg w={14} h={8}><path d="M1 7l6-6 6 6" stroke="#555" /></Svg>
        </Collapse>
      </Ribbon>

      <FormulaBar>
        <NameBox>
          <span>A11</span>
          <Svg w={8} h={5}><path d="M0 0h8L4 5z" fill="#777" /></Svg>
        </NameBox>
        <Dots><i /><i /><i /></Dots>
        <FxBox>
          <Svg w={16} h={16}><path d="M1 1l14 14M15 1L1 15" stroke="#c4c4c4" strokeWidth="2.2" /></Svg>
          <Svg w={18} h={16}><path d="M1 9l5 6L17 2" stroke="#c4c4c4" strokeWidth="3" /></Svg>
          <FxGlyph>fx</FxGlyph>
        </FxBox>
        <FormulaInput>
          <Svg w={12} h={7}><path d="M1 1l5 5 5-5" stroke="#777" /></Svg>
        </FormulaInput>
      </FormulaBar>

      <SheetWrap>
        <Grid>
          <Corner>
            <Svg w={35} h={36}><path d="M35 0v36H0z" fill="#b5b5b5" /></Svg>
          </Corner>
          {columns.map(c => (
            <ColHead key={c} $on={c === 'A'}>{c}</ColHead>
          ))}
          {rows.map(r => (
            <React.Fragment key={r}>
              <RowHead $on={r === 11}>{r}</RowHead>
              {columns.map(c => {
                const filled = r <= 9 && (c === 'A' || c === 'B');
                return (
                  <Cell key={c} $fill={filled} $center={c === 'B'} $active={r === 11 && c === 'A'}>
                    {filled ? (c === 'A' ? content[r] : '有') : null}
                  </Cell>
                );
              })}
            </React.Fragment>
          ))}
          <Ants />
        </Grid>
        <VScroll>
          <ScrollBtn>
            <Svg w={10} h={6}><path d="M0 6h10L5 0z" fill="#777" /></Svg>
          </ScrollBtn>
          <VTrack><VThumb /></VTrack>
          <ScrollBtn>
            <Svg w={10} h={6}><path d="M0 0h10L5 6z" fill="#777" /></Svg>
          </ScrollBtn>
        </VScroll>
      </SheetWrap>

      <TabBar>
        <TabArrows>
          <Svg w={7} h={11}><path d="M7 0v11L0 5.5z" fill="#bdbdbd" /></Svg>
          <Svg w={7} h={11}><path d="M0 0v11l7-5.500z" fill="#bdbdbd" /></Svg>
        </TabArrows>
        <SheetTab>Sheet1</SheetTab>
        <AddSheet>
          <Svg w={20} h={20}>
            <circle cx="10" cy="10" r="9" stroke="#8c8c8c" strokeWidth="1.4" />
            <path d="M10 5v10M5 10h10" stroke="#8c8c8c" strokeWidth="1.8" />
          </Svg>
        </AddSheet>
        <TabDots><i /><i /><i /></TabDots>
        <HScroll>
          <HBtn><Svg w={6} h={10}><path d="M6 0v10L0 5z" fill="#666" /></Svg></HBtn>
          <HTrack><HThumb /></HTrack>
          <HBtn><Svg w={6} h={10}><path d="M0 0v10l6-5z" fill="#666" /></Svg></HBtn>
        </HScroll>
      </TabBar>

      <StatusBar>
        <StatusText>选定目标区域，然后按 ENTER 或选择”粘贴”</StatusText>
        <StatusRight>
          <ViewBtn $on>
            <Svg w={16} h={16}>
              <path d="M.5.5h15v15H.5zM.5 5.500h15M.5 10.500h15M5.500.5v15M10.500.5v15" stroke="#666" />
            </Svg>
          </ViewBtn>
          <ViewBtn>
            <Svg w={17} h={16}>
              <path d="M.5.5h16v15H.5zM4.500 3.500h8v9h-8zM6 6h5M6 8h5M6 10h5" stroke="#666" />
            </Svg>
          </ViewBtn>
          <ViewBtn>
            <Svg w={17} h={16}>
              <path d="M.5.5h16v15H.5zM.5 10.500h10V.5M6 .5v6" stroke="#666" />
            </Svg>
          </ViewBtn>
          <Zoomer>
            <Svg w={10} h={3}><path d="M0 1.500h10" stroke="#444" strokeWidth="1.4" /></Svg>
            <ZoomTrack><ZoomThumb /></ZoomTrack>
            <Svg w={10} h={10}><path d="M0 5h10M5 0v10" stroke="#444" strokeWidth="1.2" /></Svg>
          </Zoomer>
          <Percent>190%</Percent>
        </StatusRight>
      </StatusBar>

      <Watermark>
        <MarkTop>
          <MarkBai>Bai</MarkBai>
          <Svg w={100} h={108}>
            <g stroke="#dedede" strokeWidth="2">
              <ellipse cx="13" cy="42" rx="13" ry="17" />
              <ellipse cx="38" cy="18" rx="13" ry="18" />
              <ellipse cx="68" cy="19" rx="13" ry="17" />
              <ellipse cx="88" cy="49" rx="12" ry="17" />
              <path d="M50 44C38 44 34 58 24 66 14 74 7 80 7 90c0 12 11 17 23 17 8 0 14-3 20-3 8 0 14 3 22 3 12 0 21-5 21-17 0-10-9-18-17-24-10-8-14-22-26-22z" />
            </g>
            <text x="50" y="94" textAnchor="middle" fontSize="46" fontWeight="700" fontFamily="Liberation Sans">du</text>
          </Svg>
          <MarkJing>经验</MarkJing>
        </MarkTop>
        <MarkUrl>jingyan.baidu.com</MarkUrl>
      </Watermark>

      <Dialog>
        <DialogTitle>
          <span>选择性粘贴</span>
          <HelpMark>?</HelpMark>
          <Svg w={14} h={14}><path d="M1 1l12 12M13 1L1 13" stroke="#222" /></Svg>
        </DialogTitle>
        <DialogBody>
          <Legend $top={10}>粘贴</Legend>
          <OptionGrid $top={6}>
            {leftPaste.map(([t, k], i) => (
              <React.Fragment key={k}>
                <Option><Radio $on={i === 0} /><Mnemonic text={t} k={k} /></Option>
                <Option $dim={i === 5}>
                  <Radio $dim={i === 5} />
                  <Mnemonic text={rightPaste[i][0]} k={rightPaste[i][1]} u={i !== 5} />
                </Option>
              </React.Fragment>
            ))}
          </OptionGrid>
          <Legend $top={12}>运算</Legend>
          <OptionGrid $top={6}>
            <Option><Radio $on /><Mnemonic text="无" k="O" /></Option>
            <Option><Radio /><Mnemonic text="乘" k="M" /></Option>
            <Option><Radio /><Mnemonic text="加" k="D" /></Option>
            <Option><Radio /><Mnemonic text="除" k="I" /></Option>
            <Option><Radio /><Mnemonic text="减" k="S" /></Option>
          </OptionGrid>
          <Divider />
          <OptionGrid $top={8}>
            <Option><Check /><Mnemonic text="跳过空单元" k="B" /></Option>
            <Option>
              <Check $on>
                <Svg w={12} h={10}><path d="M1 5l3.500 3.500L11 1.500" stroke="#0078d7" strokeWidth="1.3" /></Svg>
              </Check>
              <FocusLabel><Mnemonic text="转置" k="E" /></FocusLabel>
            </Option>
          </OptionGrid>
          <ButtonRow>
            <DlgButton $w={101} $dim>粘贴链接(L)</DlgButton>
            <DlgButton $w={99} $primary>确定</DlgButton>
            <DlgButton $w={99}>取消</DlgButton>
          </ButtonRow>
        </DialogBody>
      </Dialog>
      <RedBox />
    </Page>
  );
}
